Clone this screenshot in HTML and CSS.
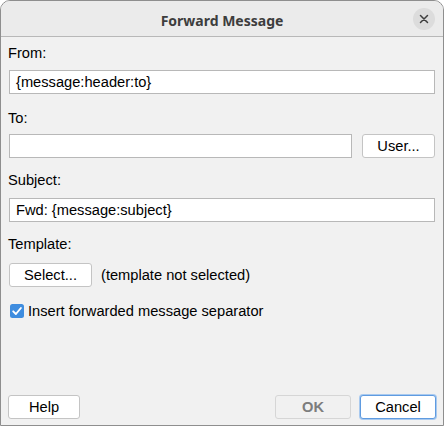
FILE: index.html
```html
<!DOCTYPE html>
<html>
<head>
<meta charset="utf-8">
<title>Forward Message</title>
<link rel="stylesheet" href="styles.css">
</head>
<body>
<div class="window">
  <div class="titlebar">
    <div class="title">Forward Message</div>
    <button class="close" aria-label="Close">
      <svg width="10" height="10" viewBox="0 0 10 10"><path d="M1.5 1.5 L8.5 8.5 M8.5 1.5 L1.5 8.5" stroke="#3f3f3f" stroke-width="1.5" stroke-linecap="round"/></svg>
    </button>
  </div>
  <div class="content">
    <div class="label l-from">From:</div>
    <div class="field f-from">{message:header:to}</div>

    <div class="label l-to">To:</div>
    <div class="row r-to">
      <div class="field grow"></div>
      <button class="btn btn-user">User...</button>
    </div>

    <div class="label l-subject">Subject:</div>
    <div class="field f-subject">Fwd: {message:subject}</div>

    <div class="label l-template">Template:</div>
    <div class="row r-template">
      <button class="btn btn-select">Select...</button>
      <span class="note">(template not selected)</span>
    </div>

    <div class="check-row">
      <span class="checkbox">
        <svg width="14" height="14" viewBox="0 0 14 14"><rect x="0" y="0" width="14" height="14" rx="2.5" fill="#3f8ddf"/><path d="M3.2 7.3 L5.9 10 L10.9 4" stroke="#fff" stroke-width="1.9" fill="none" stroke-linecap="round" stroke-linejoin="round"/></svg>
      </span>
      <span class="check-label">Insert forwarded message separator</span>
    </div>

    <div class="footer">
      <button class="btn btn-help">Help</button>
      <div class="footer-right">
        <button class="btn btn-ok" disabled>OK</button>
        <button class="btn btn-cancel">Cancel</button>
      </div>
    </div>
  </div>
</div>
</body>
</html>
```

FILE: styles.css
```css
html, body {
  margin: 0;
  padding: 0;
  background: #ffffff;
}

.window {
  width: 444px;
  height: 426px;
  box-sizing: border-box;
  border: 1px solid #8e8e8e;
  border-radius: 10px 10px 0 0;
  background: #f1f1f1;
  display: flex;
  flex-direction: column;
  overflow: hidden;
  font-family: "Liberation Sans", Arial, sans-serif;
  font-size: 14.67px;
  color: #000;
}

.titlebar {
  height: 35px;
  border-bottom: 1px solid #b8b8b8;
  background: #ebebeb;
  display: flex;
  align-items: center;
  justify-content: center;
  position: relative;
  flex: none;
}

.title {
  font-family: "Noto Sans", "DejaVu Sans", sans-serif;
  font-weight: bold;
  font-size: 14px;
  color: #3d3d3d;
  padding-top: 3px;
}

.close {
  position: absolute;
  right: 8px;
  top: 7px;
  width: 22px;
  height: 22px;
  border-radius: 50%;
  border: none;
  background: #dcdcdc;
  padding: 0;
  display: flex;
  align-items: center;
  justify-content: center;
}

.content {
  flex: 1;
  display: flex;
  flex-direction: column;
  padding: 8px 7px 6px 8px;
}

.label {
  line-height: 17px;
  height: 17px;
  margin-left: -1px;
}

.field {
  height: 24px;
  box-sizing: border-box;
  border: 1px solid #b8b8b8;
  background: #fff;
  padding: 0 6px;
  line-height: 22px;
  white-space: nowrap;
}

.f-from { margin-top: 8px; margin-right: 1px; }
.l-to { margin-top: 16px; }
.r-to { margin-top: 7px; }
.l-subject { margin-top: 14px; }
.f-subject { margin-top: 9px; margin-right: 1px; }
.l-template { margin-top: 14px; }
.r-template { margin-top: 10px; }

.row {
  display: flex;
  align-items: center;
}

.grow { flex: 1; }

.btn {
  font-family: "Liberation Sans", Arial, sans-serif;
  font-size: 14.67px;
  color: #000;
  height: 24px;
  box-sizing: border-box;
  border: 1px solid #c4c4c4;
  border-radius: 3px;
  background: #fff;
  padding: 0;
  line-height: 22px;
}

.btn-user { width: 73px; margin-left: 10px; margin-right: 1px; }
.btn-select { width: 83px; }

.note {
  margin-left: 9px;
}

.check-row {
  margin-top: 16px;
  display: flex;
  align-items: center;
  height: 16px;
}

.checkbox {
  width: 14px;
  height: 14px;
  margin-left: 1px;
  display: flex;
}

.check-label {
  margin-left: 4px;
}

.footer {
  margin-top: auto;
  display: flex;
  justify-content: space-between;
  align-items: center;
  margin-left: -1px;
}

.btn-help { width: 72px; }

.footer-right {
  display: flex;
  gap: 9px;
}

.btn-ok {
  width: 76px;
  background: #f1f1f1;
  border-color: #d6d6d6;
  color: #7d7d7d;
  font-weight: bold;
}

.btn-cancel {
  width: 76px;
  border-color: #5f9be0;
  box-shadow: 0 0 0 1px #a8c9ef;
}
```
